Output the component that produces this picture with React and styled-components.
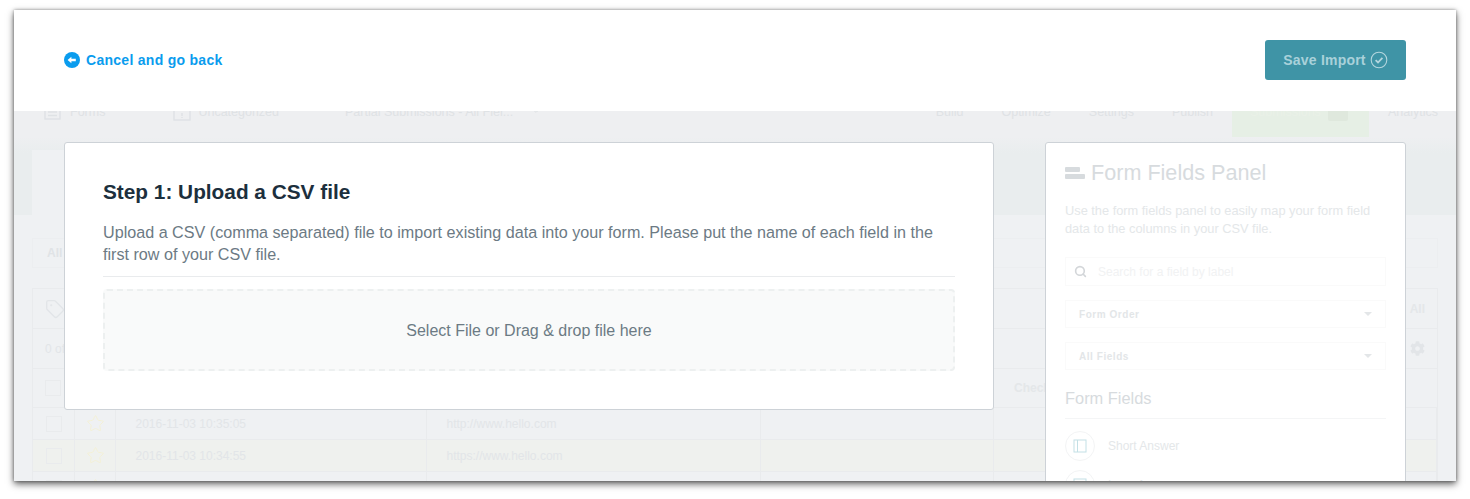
import React from "react";
import styled, { createGlobalStyle } from "styled-components";
import { Tag, Star, Search, Pencil } from "lucide-react";
import { FaCog } from "react-icons/fa";

const ROWS = [
  { date: "2016-11-03 10:35:05", url: "http://www.hello.com" },
  { date: "2016-11-03 10:34:55", url: "https://www.hello.com", tinted: true },
  { date: "", url: "" },
];

function App() {
  return (
    <>
      <Global />
      <Frame>
        <Header>
          <BackLink>
            <svg width="16" height="16" viewBox="0 0 16 16">
              <circle cx="8" cy="8" r="8" fill="#0a9cee" />
              <path d="M3.6 8 7.4 4.8V6.8H11.8V9.2H7.4V11.2Z" fill="#fff" />
            </svg>
            Cancel and go back
          </BackLink>
          <SaveButton>
            Save Import
            <svg width="18" height="18" viewBox="0 0 18 18" fill="none">
              <circle cx="9" cy="9" r="7.8" stroke="#b4d6de" strokeWidth="1.1" />
              <path d="M5.6 9.2 8 11.5 12.4 6.8" stroke="#b4d6de" strokeWidth="1.8" />
            </svg>
          </SaveButton>
        </Header>

        <Stage>
          <Dimmed>
            <Nav>
              <NavGroup>
                <svg width="17" height="18" viewBox="0 0 17 18" fill="none" stroke="#dfe2e5" strokeWidth="1.4">
                  <rect x="1" y="1" width="15" height="16" />
                  <path d="M4 10H13M4 13.5H13" />
                </svg>
                <span>Forms</span>
              </NavGroup>
              <NavGroup $left={68} $gap={7}>
                <svg width="18" height="19" viewBox="0 0 18 19" fill="none" stroke="#dfe2e5" strokeWidth="1.4">
                  <rect x="1" y="1" width="16" height="17" />
                  <path d="M9 11V14M9 15V16" />
                </svg>
                <span>Uncategorized</span>
              </NavGroup>
              <NavGroup $left={66} $gap={21}>
                <span>Partial Submissions - All Fiel...</span>
                <Pencil size={11} />
              </NavGroup>
              <NavRight>
                <span>Build</span>
                <span>Optimize</span>
                <span>Settings</span>
                <span>Publish</span>
                <GreenTab>
                  Submissions
                  <TabBadge />
                </GreenTab>
                <span>Analytics</span>
              </NavRight>
            </Nav>
            <Band>
              <BandCard />
            </Band>
            <Filter>
              <FilterBox>All</FilterBox>
            </Filter>
            <Table>
              <TableTop>
                <Tag size={20} strokeWidth={1.6} />
                <strong>All</strong>
              </TableTop>
              <TableTop>
                <span>0 of</span>
                <FaCog size={15} />
              </TableTop>
              <TableHead>
                <Check />
                <strong>Check</strong>
              </TableHead>
              {ROWS.map((row, i) => (
                <Row key={i} $tinted={row.tinted}>
                  <Cell>
                    <Check />
                  </Cell>
                  <Cell>
                    <Star size={19} strokeWidth={1.2} color="#f3f0d6" />
                  </Cell>
                  <Cell $pad>{row.date}</Cell>
                  <Cell $pad>{row.url}</Cell>
                  <Cell />
                  <Cell />
                </Row>
              ))}
            </Table>
          </Dimmed>

          <Overlay>
            <UploadCard>
              <Title>Step 1: Upload a CSV file</Title>
              <Intro>
                Upload a CSV (comma separated) file to import existing data into your form. Please put the
                name of each field in the first row of your CSV file.
              </Intro>
              <DropZone>Select File or Drag &amp; drop file here</DropZone>
            </UploadCard>

            <Panel>
              <PanelTitle>
                <PanelIcon>
                  <i />
                  <i />
                </PanelIcon>
                Form Fields Panel
              </PanelTitle>
              <PanelText>
                Use the form fields panel to easily map your form field data to the columns in your CSV file.
              </PanelText>
              <SearchBox>
                <Search size={13} strokeWidth={3} color="#d3d6d9" />
                Search for a field by label
              </SearchBox>
              <Dropdown>Form Order</Dropdown>
              <Dropdown>All Fields</Dropdown>
              <FieldsHeading>Form Fields</FieldsHeading>
              <FieldRow>
                <FieldIcon>
                  <svg width="14" height="14" viewBox="0 0 14 14" fill="none" stroke="#c3e0e6">
                    <rect x="1" y="1" width="12" height="12" />
                    <path d="M4.5 1V13" />
                  </svg>
                </FieldIcon>
                Short Answer
              </FieldRow>
              <FieldRow>
                <FieldIcon>
                  <svg width="14" height="14" viewBox="0 0 14 14" fill="none" stroke="#c3e0e6">
                    <rect x="1" y="1" width="12" height="12" />
                    <path d="M1 5H13" />
                  </svg>
                </FieldIcon>
                Long Answer
              </FieldRow>
            </Panel>
          </Overlay>
        </Stage>
      </Frame>
    </>
  );
}

const Global = createGlobalStyle`
  html, body {
    margin: 0;
    height: 100%;
    overflow: hidden;
    background: #fff;
    font-family: "Liberation Sans", Arial, sans-serif;
  }
`;

const Frame = styled.div`
  width: 1442px;
  height: 471px;
  margin: 10px 14px 0;
  display: flex;
  flex-direction: column;
  overflow: hidden;
  background: #eff1f3;
  box-shadow: 0 3px 7px rgba(0, 0, 0, 0.62), 0 0 3px rgba(0, 0, 0, 0.35);
`;

const Header = styled.header`
  flex: none;
  height: 101px;
  padding: 30px 50px 0;
  box-sizing: border-box;
  display: flex;
  align-items: flex-start;
  justify-content: space-between;
  background: #fff;
  position: relative;
  z-index: 3;
`;

const BackLink = styled.a`
  height: 40px;
  display: flex;
  align-items: center;
  gap: 6px;
  color: #0a9cee;
  font-size: 14px;
  font-weight: 700;
  letter-spacing: 0.28px;
`;

const SaveButton = styled.button`
  width: 141px;
  height: 40px;
  display: flex;
  align-items: center;
  justify-content: center;
  gap: 4px;
  border: 0;
  border-radius: 3px;
  background: #3f94a6;
  color: #a9d1da;
  font: 700 14px "Liberation Sans", Arial, sans-serif;
  letter-spacing: 0.2px;
`;

const Stage = styled.div`
  flex: 1;
  position: relative;
  overflow: hidden;
`;

const Dimmed = styled.div`
  color: #e2e5e8;
  font-size: 12px;
`;

const Nav = styled.nav`
  height: 35px;
  margin-top: -9px;
  padding-left: 30px;
  display: flex;
  align-items: flex-start;
  background: #eeeff1;
  font-size: 12.5px;
  color: #dfe2e5;
`;

const NavGroup = styled.div`
  display: flex;
  align-items: flex-start;
  gap: ${(p) => p.$gap || 9}px;
  margin-left: ${(p) => p.$left || 0}px;
  line-height: 20px;
`;

const NavRight = styled.div`
  margin-left: auto;
  padding-right: 18px;
  display: flex;
  align-items: flex-start;
  gap: 38px;
  line-height: 20px;
`;

const GreenTab = styled.span`
  width: 137px;
  height: 35px;
  margin: 0 -19px 0 -19px;
  padding-left: 18px;
  box-sizing: border-box;
  display: flex;
  align-items: flex-start;
  gap: 7px;
  background: #e6efe5;
  color: #eaf1e8;
`;

const TabBadge = styled.span`
  width: 20px;
  height: 19px;
  border-radius: 2px;
  background: #dfe8dd;
`;

const Band = styled.div`
  height: 78px;
  padding: 13px 18px 0;
  box-sizing: border-box;
  background: linear-gradient(#eeeff1, #e9edee 16px);
`;

const BandCard = styled.div`
  width: 500px;
  height: 65px;
  background: #eff1f3;
`;

const Filter = styled.div`
  height: 73px;
  padding: 23px 18px 0;
  box-sizing: border-box;
`;

const FilterBox = styled.div`
  height: 30px;
  line-height: 28px;
  padding-left: 14px;
  border: 1px solid #eceef0;
  box-sizing: border-box;
  font-weight: 700;
  color: #e0e3e6;
`;

const Table = styled.div`
  margin: 0 18px;
  border: 1px solid #e9ebed;
  border-bottom: 0;
`;

const TableTop = styled.div`
  height: 40px;
  padding: 0 12px;
  display: flex;
  align-items: center;
  justify-content: space-between;
  border-bottom: 1px solid #e9ebed;
  box-sizing: border-box;
  svg {
    flex: none;
  }
  strong {
    color: #e4e7e9;
  }
`;

const TableHead = styled(TableTop)`
  height: 38px;
  border-bottom: 0;
  strong {
    margin-right: 375px;
  }
`;

const Row = styled.div`
  height: 32px;
  display: grid;
  grid-template-columns: 42px 41px 311px 334px 233px 1fr;
  background: ${(p) => (p.$tinted ? "#eff1ee" : "#eff1f3")};
  border-top: 1px solid #e9ebed;
  box-sizing: border-box;
`;

const Cell = styled.div`
  display: flex;
  align-items: center;
  justify-content: ${(p) => (p.$pad ? "flex-start" : "center")};
  padding-left: ${(p) => (p.$pad ? "19.5px" : 0)};
  border-right: 1px solid #e9ebed;
`;

const Check = styled.span`
  width: 16px;
  height: 16px;
  border: 1px solid #e9ebed;
  box-sizing: border-box;
`;

const Overlay = styled.div`
  position: absolute;
  inset: 31px 50px auto 50px;
  display: flex;
  align-items: flex-start;
  justify-content: space-between;
`;

const UploadCard = styled.section`
  width: 930px;
  height: 268px;
  padding: 37px 38px 0;
  box-sizing: border-box;
  background: #fff;
  border: 1px solid #cdd2d7;
  border-radius: 3px;
`;

const Title = styled.h2`
  margin: 0;
  font-size: 20.8px;
  line-height: 24px;
  font-weight: 700;
  color: #1c2f3d;
`;

const Intro = styled.p`
  margin: 17px 0 12px;
  padding-bottom: 11px;
  border-bottom: 1px solid #e9ebed;
  font-size: 16.15px;
  line-height: 22px;
  color: #6c7a84;
`;

const DropZone = styled.div`
  height: 82px;
  padding-top: 2px;
  display: flex;
  align-items: center;
  justify-content: center;
  box-sizing: border-box;
  background: #f9fafa;
  border: 2px dashed #edf0f0;
  border-radius: 4px;
  font-size: 16px;
  color: #6c7a84;
`;

const Panel = styled.aside`
  width: 361px;
  height: 400px;
  padding: 18px 19px 0;
  box-sizing: border-box;
  background: #fff;
  border: 1px solid #cdd2d7;
  border-radius: 3px;
`;

const PanelTitle = styled.div`
  display: flex;
  align-items: center;
  gap: 6px;
  font-size: 21.6px;
  line-height: 24px;
  color: #d7dbde;
`;

const PanelIcon = styled.span`
  width: 20px;
  display: flex;
  flex-direction: column;
  gap: 2px;
  i {
    display: block;
    height: 5px;
    background: #d7dbde;
    border-radius: 1px;
  }
  i:first-child {
    width: 15px;
  }
`;

const PanelText = styled.p`
  margin: 17px 0 19px;
  font-size: 12.8px;
  line-height: 18px;
  color: #e4e7e9;
`;

const SearchBox = styled.div`
  height: 29px;
  padding-left: 8px;
  box-sizing: border-box;
  display: flex;
  align-items: center;
  gap: 11px;
  border: 1px solid #fafafa;
  font-size: 12px;
  color: #f1f2f3;
`;

const Dropdown = styled.div`
  height: 28px;
  margin-top: 14px;
  padding: 0 13px;
  box-sizing: border-box;
  display: flex;
  align-items: center;
  justify-content: space-between;
  border: 1px solid #fafafa;
  font-size: 10px;
  font-weight: 700;
  letter-spacing: 0.55px;
  color: #e3e6e8;
  &::after {
    content: "";
    border: 4px solid transparent;
    border-top-color: #e3e6e8;
    border-bottom: 0;
  }
`;

const FieldsHeading = styled.h3`
  margin: 18px 0 12px;
  padding-bottom: 10px;
  border-bottom: 1px solid #f4f5f6;
  font-size: 16.4px;
  line-height: 20px;
  font-weight: 400;
  color: #d7dbde;
`;

const FieldRow = styled.div`
  height: 30px;
  margin-bottom: 9px;
  display: flex;
  align-items: center;
  gap: 13px;
  font-size: 12px;
  color: #e4e7e9;
`;

const FieldIcon = styled.span`
  width: 30px;
  height: 30px;
  display: flex;
  align-items: center;
  justify-content: center;
  box-sizing: border-box;
  border: 1px solid #f3f4f5;
  border-radius: 50%;
`;

export default App;
